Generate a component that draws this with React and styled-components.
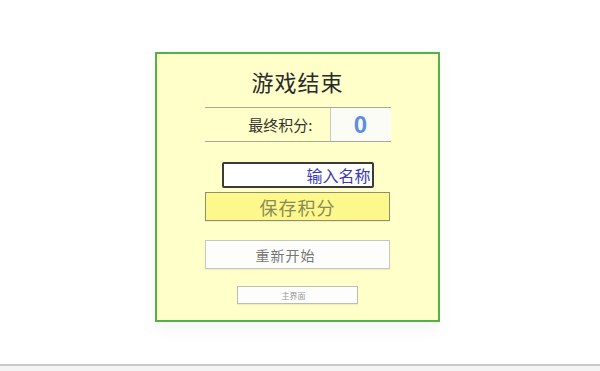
import React, { useState } from 'react';
import styled, { createGlobalStyle } from 'styled-components';

const GlobalStyle = createGlobalStyle`
  html, body {
    margin: 0;
    padding: 0;
    background: #ffffff;
  }
  body {
    font-family: "Noto Sans CJK SC", "Liberation Serif", serif;
  }
`;

const Screen = styled.div`
  width: 600px;
  height: 371px;
  display: flex;
  flex-direction: column;
  overflow: hidden;
  background: #ffffff;
`;

const Stage = styled.div`
  height: 366px;
  box-sizing: border-box;
  padding: 52px 0 0 155px;
  background: #ffffff;
`;

const BottomBar = styled.div`
  height: 5px;
  border-top: 2px solid #cacaca;
  background: #f4f4f4;
`;

const Panel = styled.div`
  width: 285px;
  height: 270px;
  box-sizing: border-box;
  border: 2px solid #53b145;
  background: #ffffca;
  box-shadow: 0 8px 16px rgba(0, 0, 0, 0.04);
  display: flex;
  flex-direction: column;
  align-items: center;
  padding-top: 12px;
`;

const Title = styled.h1`
  margin: 0;
  height: 30px;
  line-height: 30px;
  font-size: 22px;
  font-weight: 400;
  color: #2a2a2a;
  letter-spacing: 1px;
`;

const ScoreRow = styled.div`
  margin-top: 11px;
  width: 186px;
  height: 35px;
  box-sizing: border-box;
  border-top: 1px solid #a9a99a;
  border-bottom: 1px solid #a9a99a;
  display: flex;
`;

const ScoreLabel = styled.div`
  flex: 1;
  display: flex;
  align-items: center;
  justify-content: flex-end;
  padding-right: 17px;
  font-size: 15px;
  color: #333333;
`;

const ScoreValue = styled.div`
  width: 60px;
  border-left: 1px solid #c9c9bd;
  background: #fcfcf6;
  display: flex;
  align-items: center;
  justify-content: center;
  font-family: "Liberation Sans", Arial, sans-serif;
  font-weight: 700;
  font-size: 24px;
  color: #5b8ee2;
`;

const NameInput = styled.input`
  margin-top: 20px;
  width: 152px;
  height: 26px;
  box-sizing: border-box;
  border: 2px solid #3a3a3a;
  border-radius: 2px;
  background: #ffffff;
  padding: 0 1px;
  text-align: right;
  font-family: "Noto Sans CJK SC", sans-serif;
  font-size: 16px;
  color: #3a3ab2;
  outline: none;

  &::placeholder {
    color: #3a3ab2;
    opacity: 1;
  }
`;

const Button = styled.button`
  margin-top: ${p => p.$gap}px;
  width: ${p => p.$w}px;
  height: ${p => p.$h}px;
  box-sizing: border-box;
  padding: 0 ${p => p.$shift || 0}px 0 0;
  border: 1px solid ${p => p.$border};
  background: ${p => p.$bg};
  color: ${p => p.$color};
  font-family: "Noto Sans CJK SC", sans-serif;
  font-size: ${p => p.$size}px;
  letter-spacing: ${p => p.$spacing || 0}px;
  box-shadow: 0 1px 1px rgba(0, 0, 0, 0.06);
  cursor: pointer;
`;

export default function App() {
  const [score] = useState(0);
  const [name, setName] = useState('');

  return (
    <>
      <GlobalStyle />
      <Screen>
        <Stage>
          <Panel>
            <Title>游戏结束</Title>
            <ScoreRow>
              <ScoreLabel>最终积分:</ScoreLabel>
              <ScoreValue>{score}</ScoreValue>
            </ScoreRow>
            <NameInput
              placeholder="输入名称"
              value={name}
              onChange={e => setName(e.target.value)}
            />
            <Button $gap={4} $w={185} $h={29} $bg="#fcf88b" $border="#8f8f68" $color="#8a8a58" $size={18} $spacing={1}>
              保存积分
            </Button>
            <Button $gap={19} $w={185} $h={29} $bg="#fdfdfb" $border="#c8c8c0" $color="#777777" $size={14} $spacing={1} $shift={24}>
              重新开始
            </Button>
            <Button $gap={17} $w={121} $h={18} $bg="#fdfdfb" $border="#bdbdb5" $color="#9a9a9a" $size={8} $shift={8}>
              主界面
            </Button>
          </Panel>
        </Stage>
        <BottomBar />
      </Screen>
    </>
  );
}
